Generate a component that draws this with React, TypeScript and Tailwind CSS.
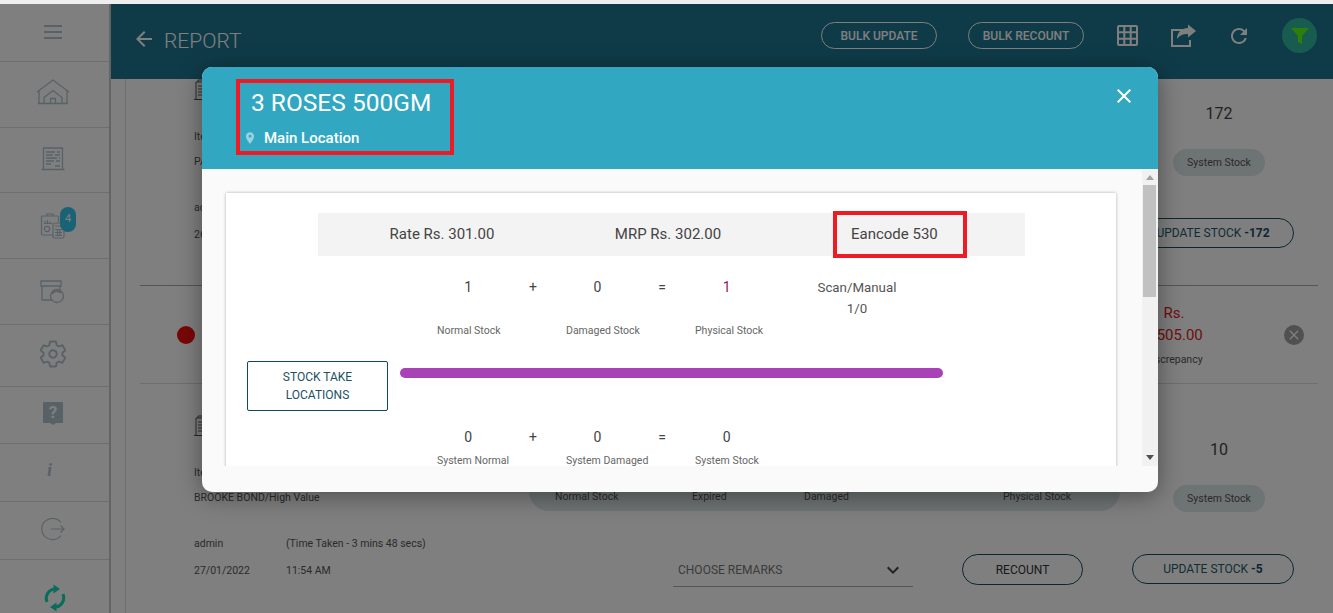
import { IoSettingsOutline } from "react-icons/io5";
import { MdClose, MdKeyboardArrowDown, MdLocationOn, MdRefresh, MdArrowBack } from "react-icons/md";

const iconClass = "text-[#b0c4cc]";

const HomeIcon = () => (
  <svg width="34" height="26" viewBox="0 0 34 26" fill="none" stroke="currentColor" strokeWidth="1.3" className={iconClass}>
    <path d="M1 13 17 1l16 12" />
    <path d="M2 24.500h30M3 12v12.500M31 12v12.500M8 24.500v-6l9-7 9 7v6" />
    <path d="M14.500 24.500v-5h5v5" />
  </svg>
);

const ReportIcon = () => (
  <svg width="24" height="24" viewBox="0 0 24 24" fill="none" stroke="currentColor" strokeWidth="1.3" className={iconClass}>
    <path d="M2.500 1h19v21.500h-19zM.5 22.500h23" />
    <path d="M5 5h9M16 5h3M5 8h7M14 8h5M5 11h11M18 11h1M5 14h8M15 14h4M5 17h5M14 19h5" />
  </svg>
);

const StockIcon = () => (
  <svg width="25" height="26" viewBox="0 0 25 26" fill="none" stroke="currentColor" strokeWidth="1.2" className={iconClass}>
    <path d="M13 22H2.500a1 1 0 0 1-1-1V4a1 1 0 0 1 1-1h15a1 1 0 0 1 1 1v5" />
    <path d="M7 3V1h6v2" />
    <circle cx="7" cy="16" r="2.600" />
    <path d="M5 10V8M7.500 10V7M10 10V8.500M4 10.500h8" />
    <rect x="13" y="10" width="11" height="15" rx="1.500" />
    <path d="M15 13h7M15 16.500h7M15 19.500h7M15 22.500h7M17.500 16v7M20 16v7" />
  </svg>
);

const BoxIcon = () => (
  <svg width="25" height="24" viewBox="0 0 25 24" fill="none" stroke="currentColor" strokeWidth="1.300" className={iconClass}>
    <path d="M1 1h20v5H1zM2 6v14h10M20 6v4" />
    <circle cx="17" cy="16" r="6.500" />
    <path d="M12 14a5.500 5.500 0 0 1 9-1" strokeWidth="1.800" />
  </svg>
);

const HelpIcon = () => (
  <svg width="22" height="24" viewBox="0 0 22 24" className={iconClass}>
    <path d="M2 1h18a1 1 0 0 1 1 1v19a1 1 0 0 1-1 1h-6l-3 2-3-2H2a1 1 0 0 1-1-1V2a1 1 0 0 1 1-1z" fill="currentColor" />
    <text x="11" y="17" textAnchor="middle" fontSize="17" fontWeight="700" fill="#ffffff" fontFamily="Roboto">?</text>
  </svg>
);

const LogoutIcon = () => (
  <svg width="24" height="24" viewBox="0 0 24 24" fill="none" stroke="currentColor" strokeWidth="1.200" className={iconClass}>
    <path d="M20 5.500a10.700 10.700 0 1 0 0 13M10 12h13M19.500 8.500 23 12l-3.500 3.500" />
  </svg>
);

const SyncIcon = () => (
  <svg width="24" height="28" viewBox="0 0 24 28" fill="none" stroke="#14d8b4" strokeWidth="3">
    <path d="M4 18A9.500 9.500 0 0 1 11 5" />
    <path d="M20 10a9.500 9.500 0 0 1-7 13" />
    <path d="M10.500 0.500 17 5l-6.500 4.500zM13.500 18.500 7 23l6.500 4.500z" fill="#14d8b4" stroke="none" />
  </svg>
);

const GridIcon = () => (
  <svg width="21" height="21" viewBox="0 0 21 21" fill="none" stroke="white" strokeWidth="2">
    <rect x="1" y="1" width="19" height="19" rx="1" />
    <path d="M7.300 1v19M13.700 1v19M1 7.300h19M1 13.700h19" />
  </svg>
);

const ShareIcon = () => (
  <svg width="26" height="23" viewBox="0 0 26 23" fill="none">
    <path d="M12 6H1v16h18v-6" stroke="white" strokeWidth="2" />
    <path d="M25 7 17 .5V4C10 4 6 9 6 15c3-4 6-5 11-5v3.500z" fill="white" />
  </svg>
);

const DocStack = () => (
  <svg width="22" height="21" viewBox="0 0 22 21" fill="none" stroke="#555" strokeWidth="1">
    <path d="M4 3V1h12v2M2 5V3h16v17M2 5v15M0 20.500h20M4 7h12M4 10h12M4 13h12M4 16h12" />
  </svg>
);

const sideItems = [
  { h: "h-[66px] pb-[6px]", icon: <HomeIcon /> },
  { h: "h-[65px] pb-[2px]", icon: <ReportIcon /> },
  {
    h: "h-[66px]",
    icon: (
      <div className="relative">
        <StockIcon />
        <span className="absolute -top-[6px] left-[20px] flex h-[25px] w-[16px] items-center justify-center rounded-[8px] bg-[#34c4ea] text-[11px] text-white">4</span>
      </div>
    ),
  },
  { h: "h-[66px]", icon: <BoxIcon /> },
  { h: "h-[62px] pb-[4px]", icon: <IoSettingsOutline className={`${iconClass} h-[30px] w-[30px]`} /> },
  { h: "h-[57px] pb-[4px]", icon: <HelpIcon /> },
  { h: "h-[58px] pb-[4px] pr-[6px]", icon: <span className="font-['Liberation_Serif'] text-[18px] font-bold italic text-[#b0c4cc]">i</span> },
  { h: "h-[58px] pb-[4px]", icon: <LogoutIcon /> },
];

const Sidebar = () => (
  <aside className="flex w-[111px] shrink-0 flex-col border-r-2 border-[#c8c8c8] bg-white pr-0">
    <div className="flex h-[57px] shrink-0 items-center justify-center pb-[2px] pr-[4px]">
      <div className="flex w-[18px] flex-col gap-[4px]">
        <span className="h-[2px] bg-[#b0c4cc]" />
        <span className="h-[2px] bg-[#b0c4cc]" />
        <span className="h-[2px] bg-[#b0c4cc]" />
      </div>
    </div>
    {sideItems.map((item, i) => (
      <div key={i} className={`${item.h} flex shrink-0 items-center justify-center border-t border-[#dddddd]`}>
        <div className="mr-[4px] flex">{item.icon}</div>
      </div>
    ))}
    <div className="flex flex-1 justify-center border-t border-[#dddddd] pt-[24px]">
      <SyncIcon />
    </div>
  </aside>
);

const TopBar = () => (
  <header className="flex h-[75px] shrink-0 items-center bg-[#1e7692] pb-[6px] text-white">
    <MdArrowBack className="ml-[21px] h-[24px] w-[24px]" />
    <span className="ml-[8px] mt-[6px] text-[21px] font-light">REPORT</span>
    <div className="mb-[6px] ml-auto flex items-center">
      <button className="h-[27px] w-[116px] rounded-full border border-white text-[12px] font-medium">BULK UPDATE</button>
      <button className="ml-[31px] h-[27px] w-[116px] rounded-full border border-white text-[12px] font-medium">BULK RECOUNT</button>
      <span className="ml-[33px]"><GridIcon /></span>
      <span className="ml-[33px]"><ShareIcon /></span>
      <MdRefresh className="ml-[30px] h-[24px] w-[24px]" />
      <span className="ml-[31px] mr-[16px] flex h-[35px] w-[35px] items-center justify-center rounded-full bg-[#30b8a0]">
        <svg width="18" height="18" viewBox="0 0 18 18"><path d="M0 1h18l-7 8v8l-4-2V9z" fill="#5cff14" /></svg>
      </span>
    </div>
  </header>
);

const StockRow = ({ item, date, user, time, qty, update, top, middle }: {
  item: string; date: string; user: string; time: string; qty: string; update: string; top: string; middle?: boolean;
}) => (
  <div className={`${top} flex pl-[54px] text-[10.5px] text-[#555]`}>
    <div className="w-[335px] shrink-0">
      <DocStack />
      <p className="mt-[30px] h-[14px] leading-[14px]">Item / Brand</p>
      <p className="mt-[11px] leading-[14px]">{item}</p>
      <div className="mt-[32px] flex leading-[14px]">
        <span className="w-[92px]">{user}</span>
        <span>(Time Taken - {time})</span>
      </div>
      <div className="mt-[13px] flex leading-[14px]">
        <span className="w-[92px]">{date}</span>
        <span>11:54 AM</span>
      </div>
    </div>
    <div className="w-[591px] shrink-0">
      {middle && (
        <>
          <div className="mt-[56px] flex h-[40px] rounded-b-[20px] bg-[#dde6e8] pl-[26px] pt-[19px] leading-[14px]">
            <span className="w-[137px]">Normal Stock</span>
            <span className="w-[112px]">Expired</span>
            <span className="w-[199px]">Damaged</span>
            <span>Physical Stock</span>
          </div>
          <div className="mt-[43px] flex">
            <div className="ml-[144px] flex h-[33px] w-[240px] items-center justify-between border-b border-[#aaaaaa] pl-[5px] pr-[8px] text-[12px] text-[#777]">
              CHOOSE REMARKS
              <MdKeyboardArrowDown className="h-[24px] w-[24px] text-[#444]" />
            </div>
            <button className="ml-[49px] h-[31px] w-[121px] rounded-full border border-[#144e5e] text-[12px] text-[#333]">RECOUNT</button>
          </div>
        </>
      )}
    </div>
    <div className="ml-[12px] flex w-[174px] shrink-0 flex-col">
      <p className="mt-[25px] text-center text-[16px] leading-[20px] text-[#444]">{qty}</p>
      <span className="mx-auto mt-[25px] flex h-[27px] w-[92px] items-center justify-center rounded-full bg-[#dde6e8]">System Stock</span>
      <button className="mt-[42px] h-[30px] w-[162px] rounded-full border border-[#144e5e] text-[12px] text-[#1e5a6c]">
        UPDATE STOCK <b className="text-[#144e6e]">{update}</b>
      </button>
    </div>
  </div>
);

const NumberRow = ({ values, accent }: { values: string[]; accent?: boolean }) => (
  <div className="grid h-[22px] grid-cols-[repeat(5,64.6px)] items-center text-center text-[14px] text-[#444]">
    <span>{values[0]}</span>
    <span>+</span>
    <span>{values[1]}</span>
    <span>=</span>
    <span className={accent ? "text-[#8e1b5e]" : ""}>{values[2]}</span>
  </div>
);

const LabelRow = ({ labels, gap }: { labels: string[]; gap: string }) => (
  <div className={`${gap} flex text-[10.5px] leading-[14px] text-[#666]`}>
    {labels.map((l) => (
      <span key={l} className="w-[129px] pl-px">{l}</span>
    ))}
  </div>
);

const Modal = () => (
  <div className="absolute left-[202px] top-[63px] flex h-[425px] w-[956px] flex-col overflow-hidden rounded-[10px] bg-[#fafafa] shadow-[0_4px_24px_rgba(0,0,0,0.4)]">
    <div className="relative h-[102px] shrink-0 bg-[#31a7c2] text-white">
      <div className="ml-[34px] mt-[12px] h-[76px] w-[218px] border-4 border-[#ed1c24] pl-[6px]">
        <h2 className="ml-[5px] mt-[4px] text-[24.5px] leading-[32px]">3 ROSES 500GM</h2>
        <div className="mt-[9px] flex items-center text-[15px] font-medium leading-[20px]">
          <MdLocationOn className="ml-[-3px] h-[14px] w-[14px] text-white/50" />
          <span className="ml-[7px]">Main Location</span>
        </div>
      </div>
      <MdClose className="absolute right-[22px] top-[17px] h-[24px] w-[24px]" />
    </div>

    <div className="flex h-[297px] shrink-0 overflow-hidden">
      <div className="flex-1 overflow-hidden pl-[24px] pt-[24px]">
        <div className="h-[400px] w-[890px] bg-white pt-[20px] shadow-[0_0_3px_rgba(0,0,0,0.3)]">
          <div className="ml-[92px] flex h-[43px] w-[707px] items-center bg-[#f3f3f3] text-[15px] text-[#444]">
            <span className="w-[248px] text-center">Rate Rs. 301.00</span>
            <span className="w-[204px] text-center">MRP Rs. 302.00</span>
            <span className="ml-[63px] flex h-[47px] w-[134px] shrink-0 items-center border-4 border-[#ed1c24] pl-[14px]">Eancode 530</span>
          </div>

          <div className="ml-[210px] mt-[20px] flex">
            <NumberRow values={["1", "0", "1"]} accent />
            <div className="ml-[48px] mt-px w-[100px] text-center text-[13.3px] leading-[21px] text-[#555]">
              <p>Scan/Manual</p>
              <p>1/0</p>
            </div>
          </div>
          <div className="ml-[210px]">
            <LabelRow gap="mt-[5px]" labels={["Normal Stock", "Damaged Stock", "Physical Stock"]} />
          </div>

          <div className="ml-[21px] mt-[23px] flex items-start">
            <button className="h-[50px] w-[141px] rounded-[2px] border border-[#0d4a5a] text-[12px] leading-[18px] text-[#1a5263]">
              STOCK TAKE<br />LOCATIONS
            </button>
            <div className="ml-[12px] mt-[7px] h-[10px] w-[543px] rounded-full bg-[#a942b6]" />
          </div>

          <div className="ml-[210px] mt-[15px]">
            <NumberRow values={["0", "0", "0"]} />
            <LabelRow gap="mt-[6px]" labels={["System Normal", "System Damaged", "System Stock"]} />
          </div>
        </div>
      </div>

      <div className="relative w-[16px] shrink-0 bg-[#f1f1f1]">
        <span className="absolute left-[4px] top-[6px] h-0 w-0 border-x-4 border-b-[5px] border-x-transparent border-b-[#a3a3a3]" />
        <div className="absolute left-[1px] top-[16px] h-[112px] w-[13px] bg-[#c1c1c1]" />
        <span className="absolute bottom-[6px] left-[4px] h-0 w-0 border-x-4 border-t-[5px] border-x-transparent border-t-[#505050]" />
      </div>
    </div>
  </div>
);

export default function App() {
  return (
    <div className="h-[613px] w-[1333px] overflow-hidden bg-[#eeeeee] font-[Roboto,sans-serif]">
      <div className="h-[4px]" />
      <div className="relative flex h-[609px]">
        <Sidebar />
        <main className="flex min-w-0 flex-1 flex-col bg-white">
          <TopBar />
          <div className="ml-[14px] flex-1 border-l border-[#dddddd] pl-[14px] pr-[15px]">
            <div className="h-[207px] border-b border-[#aaaaaa]">
              <StockRow top="pt-0" item="PARLE/High Value" user="admin" time="2 mins 10 secs" date="26/01/2022" qty="172" update="-172" />
            </div>
            <div className="relative flex h-[98px] items-center border-b border-[#dddddd] pl-[37px]">
              <span className="h-[18px] w-[18px] rounded-full bg-[#f00e0e]" />
              <div className="absolute left-[994px] top-[16px] w-[80px] text-center text-[15px] leading-[22px] text-[#e02020]">
                <p>Rs.</p>
                <p>1,505.00</p>
                <p className="mt-[5px] text-[10.5px] leading-[18px] text-[#555]">Discrepancy</p>
              </div>
              <span className="ml-auto mr-[14px] flex h-[20px] w-[20px] items-center justify-center rounded-full bg-[#a0a0a0] text-white">
                <MdClose className="h-[16px] w-[16px]" />
              </span>
            </div>
            <StockRow top="pt-[31px]" item="BROOKE BOND/High Value" user="admin" time="3 mins 48 secs" date="27/01/2022" qty="10" update="-5" middle />
          </div>
        </main>
        <div className="absolute inset-0 bg-black/50" />
        <Modal />
      </div>
    </div>
  );
}
